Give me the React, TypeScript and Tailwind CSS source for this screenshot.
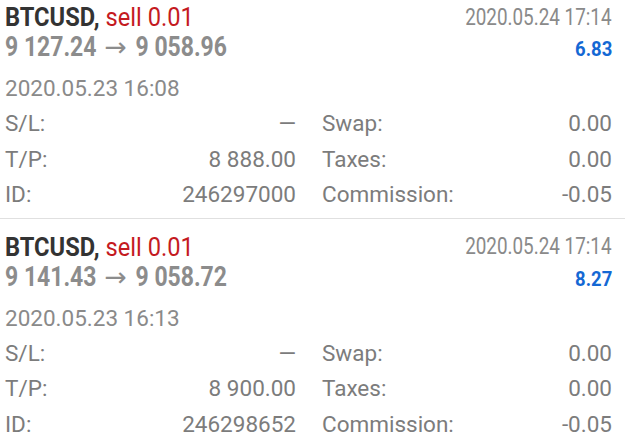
import React from 'react';

type Deal = {
  symbol: string;
  side: string;
  closeTime: string;
  openPrice: string;
  closePrice: string;
  profit: string;
  openTime: string;
  sl: string;
  tp: string;
  id: string;
  swap: string;
  taxes: string;
  commission: string;
};

const deals: Deal[] = [
  {
    symbol: 'BTCUSD',
    side: 'sell 0.01',
    closeTime: '2020.05.24 17:14',
    openPrice: '9 127.24',
    closePrice: '9 058.96',
    profit: '6.83',
    openTime: '2020.05.23 16:08',
    sl: '—',
    tp: '8 888.00',
    id: '246297000',
    swap: '0.00',
    taxes: '0.00',
    commission: '-0.05',
  },
  {
    symbol: 'BTCUSD',
    side: 'sell 0.01',
    closeTime: '2020.05.24 17:14',
    openPrice: '9 141.43',
    closePrice: '9 058.72',
    profit: '8.27',
    openTime: '2020.05.23 16:13',
    sl: '—',
    tp: '8 900.00',
    id: '246298652',
    swap: '0.00',
    taxes: '0.00',
    commission: '-0.05',
  },
];

export default function App() {
  return (
    <div className="w-[625px] h-[445px] overflow-hidden bg-white font-['Roboto',sans-serif]">
      <div className="-mt-[11px]">
        {deals.map((d, i) => (
          <DealItem key={i} d={d} />
        ))}
      </div>
    </div>
  );
}

function DealItem({ d }: { d: Deal }) {
  return (
    <div className="border-b border-[#e0e0e0] pt-[13px] pb-[5px]">
      {/* symbol + close time */}
      <div className="flex items-center justify-between h-[30px] pl-[5px] pr-[13px]">
        <span className="inline-block origin-left scale-x-[0.91] whitespace-nowrap text-[26px] leading-none font-bold text-[#333333]">
          {d.symbol}, <span className="font-normal text-[#c41a1f]">{d.side}</span>
        </span>
        <span className="inline-block origin-right scale-x-[0.82] whitespace-nowrap text-[23px] leading-none text-[#8a8a8a]">
          {d.closeTime}
        </span>
      </div>

      {/* prices + profit */}
      <div className="flex items-center justify-between h-[30px] pl-[5px] pr-[13px]">
        <span className="inline-block origin-left scale-x-[0.82] whitespace-nowrap text-[28px] leading-[28px] font-bold text-[#8c8c8c]">
          {d.openPrice}{' '}
          <span className="inline-block mx-[6px] scale-x-[1.25] font-normal font-['DejaVu_Sans',sans-serif] text-[26px] leading-[20px]">→</span>{' '}
          {d.closePrice}
        </span>
        <span className="inline-block origin-right scale-x-[0.88] whitespace-nowrap text-[21px] leading-none font-bold text-[#1468d4] mt-[5px]">
          {d.profit}
        </span>
      </div>

      <div className="mt-[8px] h-[36px] pl-[5px] text-[22.5px] leading-[36px] text-[#8a8a8a]">{d.openTime}</div>

      <div className="text-[22.5px] leading-[35.5px] text-[#7c7c7c]">
        <Row l1="S/L:" v1={d.sl} l2="Swap:" v2={d.swap} />
        <Row l1="T/P:" v1={d.tp} l2="Taxes:" v2={d.taxes} />
        <Row l1="ID:" v1={d.id} l2="Commission:" v2={d.commission} />
      </div>
    </div>
  );
}

function Row({ l1, v1, l2, v2 }: { l1: string; v1: string; l2: string; v2: string }) {
  return (
    <div className="flex h-[35.5px]">
      <div className="ml-[5px] w-[291px] flex justify-between">
        <span>{l1}</span>
        <span>{v1}</span>
      </div>
      <div className="ml-[26px] w-[290px] flex justify-between">
        <span>{l2}</span>
        <span>{v2}</span>
      </div>
    </div>
  );
}
